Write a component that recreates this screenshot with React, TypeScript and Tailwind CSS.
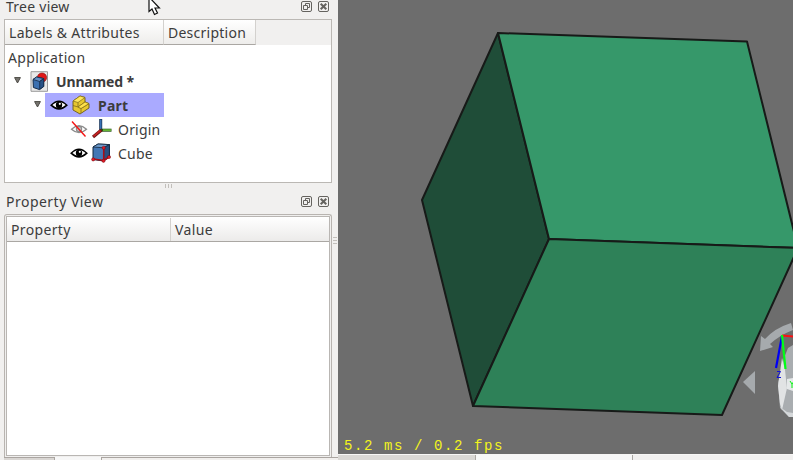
import React from 'react';

function Eye({ hidden = false }: { hidden?: boolean }) {
  if (hidden) {
    return (
      <svg width="18" height="18" viewBox="0 0 18 18" fill="none" className="block shrink-0">
        <path d="M1.5 9.2Q9 2.2 16.5 9.2Q9 16 1.5 9.2Z" stroke="#8c8c8c" strokeWidth="1.3" />
        <circle cx="9" cy="9" r="2.6" fill="#c8c8c8" stroke="#8c8c8c" strokeWidth="1.2" />
        <path d="M2 1.5 15.5 16.5" stroke="#f51414" strokeWidth="1.4" />
      </svg>
    );
  }
  return (
    <svg width="18" height="18" viewBox="0 0 18 18" fill="none" className="block shrink-0">
      <path d="M1.2 9.2Q9 1.2 16.8 9.2Q9 16.6 1.2 9.2Z" fill="#fff" stroke="#000" strokeWidth="1.6" />
      <circle cx="9" cy="9" r="3.2" fill="#000" />
      <circle cx="9.8" cy="7.8" r="1.1" fill="#fff" />
    </svg>
  );
}

function Arrow() {
  return (
    <svg width="8" height="7" viewBox="0 0 8 7" className="relative -top-px block shrink-0">
      <path d="M.6 .6H6.4L3.5 6Z" fill="#777570" stroke="#4b4944" strokeWidth="1" />
    </svg>
  );
}

function DocumentIcon() {
  return (
    <svg width="19" height="21" viewBox="0 0 19 21" className="block shrink-0">
      <path d="M1 .7H17.5V20.3H1Z" fill="#e8e8e8" stroke="#9a9a9a" />
      <circle cx="12" cy="6.6" r="4.6" fill="#e01818" stroke="#8c1717" strokeWidth=".7" />
      <path d="M3 8.5 6.5 6 13.7 7.6V15.5L9.5 18.6 3.4 16.5Z" fill="#3b70b0" stroke="#142a46" />
      <path d="M3 8.5 6.5 6 13.7 7.6 9.7 10.5Z" fill="#638fc3" stroke="#142a46" strokeWidth=".8" />
      <path d="M9.7 10.5V18.3L13.7 15.5V7.6Z" fill="#285287" stroke="#142a46" strokeWidth=".8" />
    </svg>
  );
}

function PartIcon() {
  return (
    <svg width="18" height="20" viewBox="0 0 18 20" className="block shrink-0" strokeLinejoin="round">
      <path d="M1 6 8 1 13 2.5V7L17 8.6V13L8 19 1 15Z" fill="#e7c72f" stroke="#6b5a18" strokeWidth=".9" />
      <path d="M1 6 8 1 13 2.5 6 7.5Z" fill="#ffe75b" stroke="#806b1a" strokeWidth=".7" />
      <path d="M1 10.5 6 12 13 7M6 7.5V12L9 13.5 17 8.6M9 13.5V18" fill="none" stroke="#806b1a" strokeWidth=".8" />
      <path d="M6 12 13 7 17 8.6 9 13.5Z" fill="#ffe14c" stroke="#806b1a" strokeWidth=".7" />
    </svg>
  );
}

function OriginIcon() {
  return (
    <svg width="20" height="20" viewBox="0 0 20 20" className="block shrink-0">
      <path d="M8.7 0V12" stroke="#183254" strokeWidth="3" />
      <path d="M8.7 .6V11" stroke="#3870b5" strokeWidth="1.6" />
      <path d="M9 11.2H19.5" stroke="#245116" strokeWidth="3" />
      <path d="M11 11.1H19" stroke="#76cf3d" strokeWidth="1.4" />
      <path d="M9.5 11 1 18" stroke="#671313" strokeWidth="3.2" />
      <path d="M8.5 11.5 1.5 17.4" stroke="#c52323" strokeWidth="1.8" />
    </svg>
  );
}

function CubeIcon() {
  return (
    <svg width="20" height="20" viewBox="0 0 20 20" className="block shrink-0">
      <path d="M2 4 7 1 18.4 1.6V14L12.5 18 2 16.5Z" fill="#4377b5" stroke="#14283f" />
      <path d="M2 4 7 1 18.4 1.6 12.7 4.8Z" fill="#6c98c9" stroke="#14283f" strokeWidth=".8" />
      <path d="M12.7 4.8V17.5L18.4 14V1.6Z" fill="#284f81" stroke="#14283f" strokeWidth=".8" />
      <path d="M12.7 5V17.5L2.2 16M12.7 17.5 18 14" stroke="#a90e18" strokeWidth="1.5" fill="none" />
      {[[12.7, 4.8], [12.5, 17.8], [2.2, 16.4], [18, 14]].map(([x, y]) => (
        <circle key={x} cx={x} cy={y} r="1.6" fill="#e31b25" stroke="#740b12" strokeWidth=".5" />
      ))}
    </svg>
  );
}

function DockButtons() {
  return (
    <div className="flex gap-[6px]">
      <svg width="11" height="11" viewBox="0 0 11 11" fill="none" stroke="#65635f" className="block">
        <rect x=".5" y=".5" width="10" height="10" rx="1.5" />
        <path d="M4.5 4.5V2.5H8.5V6.5H6.5M2.5 4.5H6.5V8.5H2.5Z" />
      </svg>
      <svg width="11" height="11" viewBox="0 0 11 11" fill="none" stroke="#65635f" className="block">
        <rect x=".5" y=".5" width="10" height="10" rx="1.5" />
        <path d="M2.7 2.7 8.3 8.3M8.3 2.7 2.7 8.3" strokeWidth="2" />
      </svg>
    </div>
  );
}

function TreeView() {
  return (
    <section className="ml-1 flex h-[164px] w-[328px] flex-col border border-[#bbb8b4] bg-white">
      <div className="flex h-[25px] shrink-0 bg-[#f1f0ef]">
        <div className="flex h-full w-[159px] items-center border-r border-b border-r-[#d3d1ce] border-b-[#aaa7a3] bg-gradient-to-b from-white to-[#eeedeb] pt-px pl-1">
          <span className="tracking-[0.31px]">Labels &amp; Attributes</span>
        </div>
        <div className="flex h-full w-[92px] items-center border-r border-b border-r-[#d3d1ce] border-b-[#aaa7a3] bg-gradient-to-b from-white to-[#eeedeb] pt-px pl-1">
          <span className="tracking-[0.25px]">Description</span>
        </div>
      </div>
      <div className="flex h-6 items-center pt-px pl-[3px] tracking-[0.33px]">Application</div>
      <div className="flex h-6 items-center pl-[9px] font-bold">
        <Arrow /><div className="ml-2 flex"><DocumentIcon /></div>
        <span className="ml-[7px] pt-px tracking-[-0.15px]">Unnamed *</span>
      </div>
      <div className="flex h-6 items-center pl-[29px] font-bold">
        <Arrow />
        <div className="ml-[3px] flex h-6 w-[119px] items-center bg-[#aaaaff] pl-[5px]">
          <Eye /><div className="ml-1"><PartIcon /></div><span className="ml-2 pt-px tracking-[0.2px]">Part</span>
        </div>
      </div>
      <div className="flex h-6 items-center pl-[65px]">
        <Eye hidden /><div className="ml-1"><OriginIcon /></div><span className="ml-[6px] pt-px tracking-[0.2px]">Origin</span>
      </div>
      <div className="flex h-6 items-center pl-[65px]">
        <Eye /><div className="ml-[3px]"><CubeIcon /></div><span className="ml-[7px] pt-px tracking-[0.2px]">Cube</span>
      </div>
    </section>
  );
}

function PropertyView() {
  return (
    <section className="ml-1 h-[243px] w-[328px] rounded-t-[3px] border border-b-0 border-[#b8b4b0] bg-[#f0efee] p-px">
      <div className="h-full border border-[#b9b6b3] bg-white">
        <div className="flex h-[25px] border-b border-[#aaa7a3] bg-gradient-to-b from-white to-[#ecebea] pt-px">
          <div className="flex w-[164px] items-center border-r border-[#d3d1ce] pl-1 tracking-[.35px]">Property</div>
          <div className="flex items-center pl-1 tracking-[.35px]">Value</div>
        </div>
      </div>
    </section>
  );
}

function Viewport() {
  return (
    <div className="relative h-[454px] overflow-hidden bg-[#6d6d6d]">
      <svg width="455" height="454" viewBox="338 0 455 454" className="block">
        <g stroke="#171a18" strokeWidth="2" strokeLinejoin="round">
          <path d="M498 33 549 239 473 406 422 200Z" fill="#1f4d38" />
          <path d="M498 33 747 41.5 798 248 549 239Z" fill="#36986a" />
          <path d="M549 239 798 248 722 415 473 406Z" fill="#2e8158" />
        </g>
        <path d="M760 351 761 336 765 339Q775 328 791 323L793 330Q780 335 770 344L773 347Z" fill="#a6aaad" />
        <path d="M743 382 755 371V394Z" fill="#a6aaad" />
        <path d="M784 358 788 348 793 345V417H789L780 408 778 383Z" fill="#a9adb0" />
        <path d="M782 358 785 370 787 388 782 410 780 404 778 386Z" fill="#e1e3e4" />
        <path d="M787 379 793 378V391L787 389Z" fill="#e5e8e9" />
        <path d="M780 407 787 412 793 413V417H789Z" fill="#d5d8da" />
        <path d="M782 336 776 368" stroke="#0000f5" strokeWidth="2.2" />
        <path d="M782 335.5 793 336.5" stroke="#ff1010" strokeWidth="2" />
        <path d="M782 335 785.5 369" stroke="#00ff16" strokeWidth="2.2" />
        <path d="M777 371.5H780.5L777 377.5H781" fill="none" stroke="#1010d8" />
        <path d="M790 381 792 384 795 380M792 384V388" fill="none" stroke="#00f40a" />
      </svg>
      <span className="absolute top-[437px] left-[6px] font-['Liberation_Mono',monospace] text-[14px] leading-[18px] tracking-[1.6px] whitespace-pre text-[#f4f41c]">5.2 ms / 0.2 fps</span>
    </div>
  );
}

export default function App() {
  return (
    <main className="relative flex h-[460px] w-[793px] overflow-hidden bg-[#f1f0ef] font-['Noto_Sans',sans-serif] text-[14px] leading-[18px] text-[#3c3c3c]">
      <aside className="flex h-full w-[338px] flex-col">
        <header className="flex h-[19px] items-start justify-between pr-[9px] pl-[6px]">
          <span className="leading-[14px] tracking-[.25px]">Tree view</span>
          <div className="pt-px"><DockButtons /></div>
        </header>
        <TreeView />
        <div className="flex h-[6px] items-center justify-center gap-[2px] pr-[2px]">
          <i className="h-[4px] w-px bg-[#c2bfbb]" /><i className="h-[4px] w-px bg-[#c2bfbb]" /><i className="h-[4px] w-px bg-[#c2bfbb]" />
        </div>
        <header className="flex h-[25px] items-center justify-between pr-[9px] pl-[6px]">
          <span className="tracking-[.48px]">Property View</span><DockButtons />
        </header>
        <PropertyView />
        <div className="ml-1 flex h-[3px] w-[334px]">
          <div className="w-[51px] border-t border-r border-[#aaa5a1] bg-[#d9d6d3]" />
          <div className="w-[46px] bg-[#f7f7f7]" />
          <div className="flex-1 border-t border-l border-[#aaa5a1] bg-[#f1efed]" />
        </div>
      </aside>
      <section className="w-[455px]">
        <Viewport />
        <div className="flex h-[6px] border-t border-[#f7f6f5]">
          <div className="w-[138px] border-r border-[#aaa7a3] bg-[#d9d7d4]" />
          <div className="w-[157px] border-r border-[#aaa7a3] bg-[#f7f7f7]" />
          <div className="flex-1 bg-[#f1f0ef]" />
        </div>
      </section>
      <div className="absolute top-[237px] left-[333px] flex flex-col gap-[2px]">
        <i className="h-px w-1 bg-[#c2bfbb]" /><i className="h-px w-1 bg-[#c2bfbb]" /><i className="h-px w-1 bg-[#c2bfbb]" />
      </div>
      <svg className="absolute top-0 left-[147px]" width="14" height="16" viewBox="0 0 14 16">
        <path d="M2 -3V11.5L5 9 7.5 14.5 10.5 13 8 8H12.4L2 -3Z" fill="white" stroke="#111" strokeWidth="1.2" />
      </svg>
    </main>
  );
}
